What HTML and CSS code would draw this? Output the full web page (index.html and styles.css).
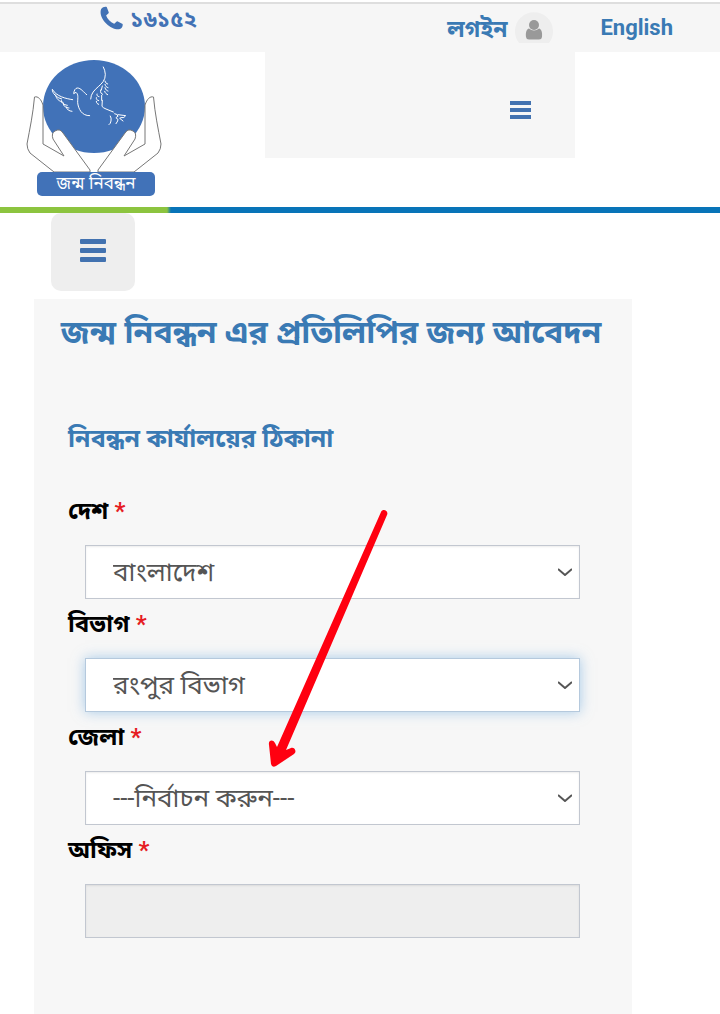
FILE: index.html
```html
<!DOCTYPE html>
<html lang="bn">
<head>
<meta charset="utf-8">
<meta name="viewport" content="width=device-width, initial-scale=1">
<title>জন্ম নিবন্ধন</title>
<link rel="stylesheet" href="styles.css">
</head>
<body>
<div class="topbar">
  <a class="phone" href="tel:16152">
    <svg class="phone-icon" viewBox="0 0 24 24" aria-hidden="true"><path d="M1.200 2.600C2.800.8 5.200-.3 7 .6L9.200 6.200C9 7.800 6.600 8.300 6.400 9.500c1.200 3.700 4.400 7 8.300 8.500 1.300-.2 1.800-2.500 3.400-2.600l5.500 2.900c.5 2.300-.9 4.500-2.900 5.300C11.500 25.500-2.500 12 1.200 2.600z"/></svg>
    <span>১৬১৫২</span>
  </a>
  <div class="account">
    <a class="login" href="#login">
      <span>লগইন</span>
      <svg class="avatar" viewBox="0 0 38 32" aria-hidden="true"><path class="avatar-bg" d="M4 32A19 19 0 1 1 34 32z"/><circle cx="19" cy="14" r="5"/><path d="M14 17.500c3 2.500 7 2.500 10 0 2.500.5 3.500 4 3 8.500q-.3 2.500-3 2.500H14q-2.700 0-3-2.500c-.5-4.500.5-8 3-8.500z"/></svg>
    </a>
    <a class="language" href="#en">English</a>
  </div>
</div>
<header class="header">
  <a class="logo" href="#home">
    <svg class="logo-art" viewBox="0 0 140 142" role="img" aria-label="জন্ম নিবন্ধন">
      <ellipse class="blue" cx="68" cy="48.500" rx="51" ry="46.500"/>
      <path class="hand" d="M17 47C15 41 12 38 8.500 39 7 56 4 70 1 86q0 5 3 9l24 19h36v-2L37 75q-3-5-8-2-4 2-2 8l11 17-21-12z"/>
      <path class="hand" d="M17 47C15 41 12 38 8.500 39 7 56 4 70 1 86q0 5 3 9l24 19h36v-2L37 75q-3-5-8-2-4 2-2 8l11 17-21-12z" transform="translate(136 0) scale(-1 1)"/>
      <g class="dove" transform="translate(19 2) scale(.3333)">
        <path d="M137 117C138 82 182 78 181 43q-1-13-6-22M180 63c2 6 4 8 8 9M180 73c2 7 5 9 9 10M180 83c2 7 5 9 9 10M179 94c2 6 5 8 9 10M172 78l-3 12M167 90c-2 8 2 12 6 13M156 102c-2 4 2 8 6 8M154 113c-1 5 3 9 7 9M154 124c0 5 3 8 7 9M170 106v15M172 121l-1 18q4 5 12 8l22 9"/>
        <path d="M125 104C116 97 108 84 97 84q-9 1-11 17l7-4c8 7 5 15 5 31 2 18 12 40 36 39"/>
        <path d="M83 119C62 116 34 109 22 88c-1 11 14 27 27 28M32 105c1 12 11 19 22 22M49 120c-1 9 7 14 18 16M55 130c-1 9 8 13 17 14M64 141c1 8 8 12 17 13"/>
        <path d="M196 168q4 6 2 15-1 8-6 11M209 161q9 1 10 8-8 3-5 6 8 2 4 8l-5 8M219 164l23 3q-4 8-14 6l-4 2 10 8"/>
      </g>
      <rect class="blue" x="11" y="114" width="118" height="24" rx="5"/>
      <text class="logo-text" x="70" y="131" text-anchor="middle">জন্ম নিবন্ধন</text>
    </svg>
  </a>
  <nav class="main-nav">
    <button class="nav-toggle" type="button" aria-label="মেনু"><svg class="bars-small" viewBox="0 0 21 18" aria-hidden="true"><path d="M0 0h21v4H0zM0 7h21v4H0zM0 14h21v4H0z"/></svg></button>
  </nav>
</header>
<div class="stripe"></div>
<main class="content">
  <button class="side-toggle" type="button" aria-label="পার্শ্ব মেনু"><svg class="bars" viewBox="0 0 26 23" aria-hidden="true"><rect width="26" height="5" rx="1"/><rect y="9" width="26" height="5" rx="1"/><rect y="18" width="26" height="5" rx="1"/></svg></button>
  <form class="panel">
    <h1 class="title">জন্ম নিবন্ধন এর প্রতিলিপির জন্য আবেদন</h1>
    <h2 class="subtitle">নিবন্ধন কার্যালয়ের ঠিকানা</h2>
    <div class="fields">
      <label class="label" for="country">দেশ <span class="required">*</span></label>
      <div class="select-box">
        <select class="control" id="country"><option>বাংলাদেশ</option></select>
        <svg class="chevron" viewBox="0 0 14 8" aria-hidden="true"><path d="M0 1l7 6 7-6"/></svg>
      </div>
      <label class="label" for="division">বিভাগ <span class="required">*</span></label>
      <div class="select-box">
        <select class="control control-active" id="division"><option>রংপুর বিভাগ</option></select>
        <svg class="chevron" viewBox="0 0 14 8" aria-hidden="true"><path d="M0 1l7 6 7-6"/></svg>
      </div>
      <label class="label" for="district">জেলা <span class="required">*</span></label>
      <div class="select-box">
        <select class="control" id="district"><option>---নির্বাচন করুন---</option></select>
        <svg class="chevron" viewBox="0 0 14 8" aria-hidden="true"><path d="M0 1l7 6 7-6"/></svg>
      </div>
      <label class="label" for="office">অফিস <span class="required">*</span></label>
      <div class="select-box"><input class="control" id="office" type="text" disabled></div>
      <svg class="arrow" viewBox="0 0 120 260" aria-hidden="true"><path d="M113 2C115-2 121 1 119 5L18 240l5-2c4-1 6 4 3 6L8 256q-4 2-5-2L1 235c-1-5 4-6 6-2l2 4z"/></svg>
    </div>
  </form>
</main>
</body>
</html>
```
FILE: styles.css
```css
* { box-sizing: border-box; }
body {
  margin: 0;
  background: #fff;
  color: #000;
  font-family: "Noto Sans", "Noto Sans Bengali", sans-serif;
}
a { color: #3a7ab4; text-decoration: none; }
button { border: 0; padding: 0; cursor: pointer; }
svg { display: block; }
.topbar {
  display: flex;
  justify-content: space-between;
  height: 52px;
  padding: 0 47px 0 100px;
  background: linear-gradient(#fff 2px, #dedede 2px, #dedede 4px, #f6f6f6 4px);
  font-size: 22px;
  font-weight: 700;
}
.phone { display: flex; gap: 7px; color: #4272b5; line-height: 36px; }
.phone-icon { width: 23px; height: 24px; margin-top: 6px; fill: #4272b5; }
.account { display: flex; gap: 47px; line-height: 56px; }
.login { display: flex; gap: 8px; font-size: 23px; }
.avatar { width: 38px; height: 32px; margin-top: 11px; fill: #999; }
.avatar-bg { fill: #eee; }
.language { font-family: Roboto, sans-serif; font-weight: 700; }
.header { display: flex; height: 155px; }
.logo { flex: 1; padding: 6px 0 0 26px; }
.logo-art { width: 140px; height: 142px; }
.blue { fill: #4172b8; }
.hand { fill: #fff; stroke: #777; stroke-width: 1; }
.dove { fill: none; stroke: #fff; stroke-width: 3; stroke-linecap: round; stroke-linejoin: round; }
.logo-text { fill: #fff; font-size: 17px; }
.main-nav {
  display: flex;
  justify-content: flex-end;
  width: 43%;
  height: 106px;
  margin-right: 145px;
  padding-right: 44px;
  background: #f6f6f6;
}
.nav-toggle { background: none; }
.bars, .bars-small { fill: #4272b0; }
.bars { width: 26px; height: 23px; }
.bars-small { width: 21px; height: 18px; margin-top: 9px; }
.stripe { height: 6px; background: linear-gradient(90deg, #8cc43f 167px, #0874b8 171px); }
.content { padding: 0 88px 0 34px; }
.side-toggle {
  display: grid;
  place-items: center;
  width: 84px;
  height: 78px;
  margin: 0 0 8px 17px;
  padding-bottom: 4px;
  border-radius: 10px;
  background: #eee;
}
.panel { padding: 8px 0 76px; background: #f7f7f7; }
.title, .subtitle { margin: 0; color: #3a7ab4; font-weight: 700; line-height: 48px; }
.title { padding-right: 4px; text-align: center; font-size: 32px; }
.subtitle { margin: 58px 34px 0; font-size: 25px; }
.fields { position: relative; margin: 0 34px; padding-top: 25px; }
.label { display: block; height: 59px; font-size: 24px; font-weight: 700; line-height: 48px; }
.required { color: #e61c23; font-family: Roboto, sans-serif; font-weight: 700; }
.select-box { display: grid; align-items: center; margin: 0 18px 0 17px; }
.control {
  grid-area: 1 / 1;
  appearance: none;
  width: 100%;
  height: 54px;
  padding: 0 40px 0 27px;
  border: 1px solid #c2c7d0;
  border-radius: 0;
  background: #fff;
  box-shadow: inset 0 1px 2px rgba(0, 0, 0, 0.08);
  color: #555;
  font-family: Roboto, "Noto Sans Bengali", sans-serif;
  font-size: 26px;
}
.control:disabled { background: #eee; opacity: 1; }
.control-active {
  border-color: #b5c9dd;
  box-shadow: 0 0 12px rgba(102, 165, 220, 0.55);
}
.chevron {
  grid-area: 1 / 1;
  justify-self: end;
  width: 14px;
  height: 8px;
  margin-right: 8px;
  fill: none;
  stroke: #555;
  stroke-width: 2;
  pointer-events: none;
}
.arrow {
  position: absolute;
  top: 49px;
  left: 200px;
  width: 120px;
  height: 260px;
  overflow: visible;
  fill: #ff0010;
  pointer-events: none;
}
```
